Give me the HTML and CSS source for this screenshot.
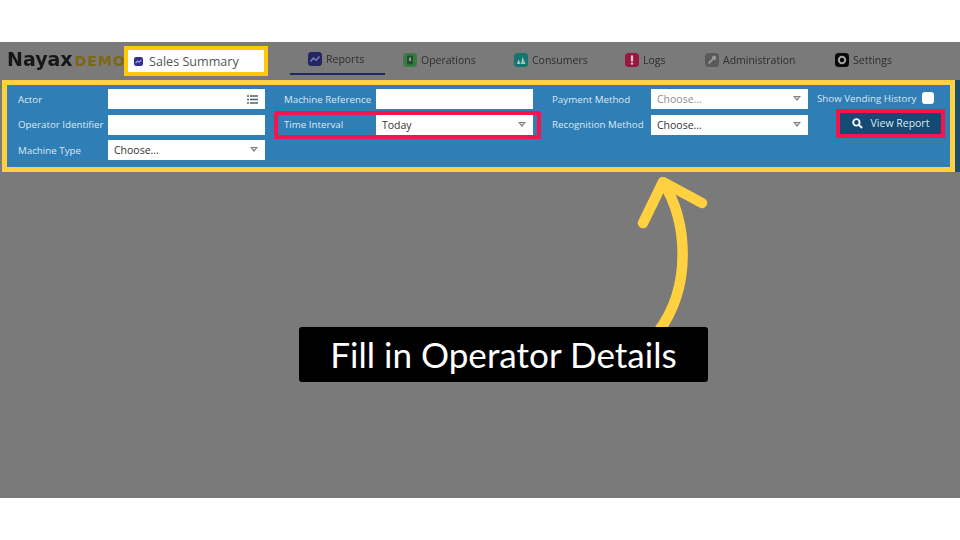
FILE: index.html
```html
<!DOCTYPE html>
<html lang="en">
<head>
<meta charset="UTF-8">
<meta name="viewport" content="width=device-width, initial-scale=1.0">
<title>Sales Summary</title>
<link rel="stylesheet" href="styles.css">
</head>
<body>

<div class="stage">
    <div class="topbar">
        <div class="logo"><span class="logo-name">Nayax</span><span class="logo-demo">DEMO</span></div>
        <div class="page-title">
            <svg class="title-icon" viewBox="0 0 14 14"><rect width="14" height="14" rx="3.5" fill="#2f3290"/><path d="M2.5 9.5 5.5 6 8 8.2 11.5 4.5" fill="none" stroke="#a9abdc" stroke-width="1.6"/></svg>
            <span>Sales Summary</span>
        </div>
        <nav class="tabs">
            <a class="tab tab-active">
                <svg class="tab-icon" viewBox="0 0 14 14"><rect width="14" height="14" rx="3.5" fill="#232660"/><path d="M2.5 9.5 5.5 6 8 8.2 11.5 4.5" fill="none" stroke="#7e81b5" stroke-width="1.5"/></svg>
                Reports
            </a>
            <a class="tab tab-ops">
                <svg class="tab-icon" viewBox="0 0 14 14"><rect width="14" height="14" rx="3.5" fill="#377c42"/><rect x="4" y="2.500" width="6" height="9" rx="0.800" fill="#2b4a31"/><rect x="6.200" y="4.500" width="1.800" height="3.500" fill="#8ab390"/></svg>
                Operations
            </a>
            <a class="tab tab-consumers">
                <svg class="tab-icon" viewBox="0 0 14 14"><rect width="14" height="14" rx="3.5" fill="#14766f"/><path d="M2.800 11 4.500 6.500 6.800 11ZM7 11 8.500 3.800 11.500 11Z" fill="#a2c4c1"/></svg>
                Consumers
            </a>
            <a class="tab tab-logs">
                <svg class="tab-icon" viewBox="0 0 14 14"><rect width="14" height="14" rx="3.5" fill="#97173f"/><rect x="5.900" y="2.500" width="2.200" height="6" fill="#e6c6d0"/><rect x="5.900" y="9.600" width="2.200" height="2" fill="#e6c6d0"/></svg>
                Logs
            </a>
            <a class="tab tab-admin">
                <svg class="tab-icon" viewBox="0 0 14 14"><rect width="14" height="14" rx="3.5" fill="#5a5a5a"/><path d="M3.500 10.500 7.500 6.500" stroke="#979797" stroke-width="1.800"/><circle cx="9" cy="5" r="2.200" fill="#979797"/></svg>
                Administration
            </a>
            <a class="tab tab-settings">
                <svg class="tab-icon" viewBox="0 0 14 14"><rect width="14" height="14" rx="3.5" fill="#0a0a0a"/><circle cx="7" cy="7" r="3.200" fill="none" stroke="#a5a5a5" stroke-width="2"/></svg>
                Settings
            </a>
        </nav>
    </div>

    <div class="filter-row">
        <form class="filters">
            <label class="field-label">Actor</label>
            <div class="input">
                <svg class="list-icon" viewBox="0 0 11 9"><path d="M0 1h2M3 1h8M0 4.500h2M3 4.500h8M0 8h2M3 8h8" stroke="#55606b" stroke-width="1.300"/></svg>
            </div>
            <label class="field-label">Machine Reference</label>
            <div class="input"></div>
            <label class="field-label">Payment Method</label>
            <div class="input select muted">Choose...<span class="caret"></span></div>
            <div class="history"><span>Show Vending History</span><span class="checkbox"></span></div>

            <label class="field-label">Operator Identifier</label>
            <div class="input"></div>
            <label class="field-label">Time Interval</label>
            <div class="input select">Today<span class="caret"></span></div>
            <label class="field-label">Recognition Method</label>
            <div class="input select">Choose...<span class="caret"></span></div>
            <div class="report-cell">
                <button type="button" class="btn-report">
                    <svg class="search-icon" viewBox="0 0 12 12"><circle cx="4.800" cy="4.800" r="3.500" fill="none" stroke="#fff" stroke-width="2"/><path d="M7.500 7.500 11 11" stroke="#fff" stroke-width="2.300"/></svg>
                    View Report
                </button>
            </div>

            <label class="field-label">Machine Type</label>
            <div class="input select">Choose...<span class="caret"></span></div>
        </form>
        <div class="filter-edge"></div>
    </div>

    <!-- annotations on top of the screenshot -->
    <div class="mark mark-time"></div>
    <div class="mark mark-report"></div>
    <svg class="arrow" viewBox="0 0 80 160">
        <path d="M27 5C52 45 56 110 22 155" fill="none" stroke="#ffd040" stroke-width="10.500"/>
        <path d="M7 46 27 5 66 26" fill="none" stroke="#ffd040" stroke-width="10.500" stroke-linecap="round" stroke-linejoin="round"/>
    </svg>
    <div class="caption">Fill in Operator Details</div>
</div>

</body>
</html>
```

FILE: styles.css
```css
/* page frame: white bands above and below the dimmed screen */
body {
    margin: 0;
    background-color: #fff;
    font-family: "Open Sans", "Noto Sans", sans-serif;
}

.stage {
    position: relative;
    height: 456px;
    margin-top: 42px;
    overflow: hidden;
    background-color: #7a7a7a;
}

/* top bar */
.topbar {
    display: flex;
    height: 38px;
}

.logo {
    display: flex;
    align-items: baseline;
    width: 124px;
    padding: 6px 0 0 7px;
    box-sizing: border-box;
    font-family: "DejaVu Sans", sans-serif;
    font-weight: bold;
    white-space: nowrap;
    filter: blur(0.4px);
}

.logo-name {
    font-size: 19px;
    color: #17171a;
}

.logo-demo {
    margin-left: 2px;
    font-size: 14px;
    letter-spacing: 1px;
    color: #7e6712;
}

.page-title {
    display: flex;
    align-items: center;
    gap: 6px;
    width: 144px;
    height: 30px;
    margin-top: 4px;
    padding-left: 6px;
    box-sizing: border-box;
    border: 4px solid #ffc80a;
    background-color: #fff;
    font-size: 12.6px;
    color: #555;
}

.title-icon {
    width: 9px;
    height: 9px;
}

.tabs {
    display: flex;
    margin-left: 22px;
    filter: blur(0.4px);
}

.tab {
    display: flex;
    align-items: center;
    gap: 4px;
    height: 33px;
    padding: 3px 0 0 18px;
    box-sizing: border-box;
    font-size: 10.5px;
    color: #2e2e2e;
}

.tab-active {
    width: 95px;
    padding-top: 2px;
    border-bottom: 2px solid #232662;
}

.tab-ops { width: 111px; }
.tab-consumers { width: 111px; }
.tab-logs { width: 80px; }
.tab-admin { width: 130px; }
.tab-settings { width: 80px; }

.tab-icon {
    width: 14px;
    height: 14px;
}

/* filter panel */
.filter-row {
    display: flex;
    padding-left: 2px;
}

.filters {
    display: grid;
    grid-template-columns: 90px 157px 111px 157px 118px 157px 1fr;
    grid-auto-rows: 20px;
    row-gap: 5.5px;
    align-items: center;
    width: 953px;
    height: 92px;
    padding: 4px 5px 0 11px;
    box-sizing: border-box;
    border: 5px solid #ffd040;
    background-color: #2f7eb6;
}

.filter-edge {
    flex: 1;
    height: 92px;
    background-color: #1a4d70;
}

.field-label {
    font-size: 9.75px;
    color: #dde8f0;
    white-space: nowrap;
}

/* labels after the first column sit 19px past the previous input */
.input + .field-label {
    padding-left: 19px;
}

.input {
    position: relative;
    height: 20px;
    padding-left: 6px;
    box-sizing: border-box;
    background-color: #fff;
    font-size: 10.5px;
    line-height: 20px;
    color: #333;
}

.muted {
    color: #8f8f8f;
}

.list-icon {
    position: absolute;
    right: 7px;
    top: 6px;
    width: 11px;
    height: 9px;
}

.caret {
    position: absolute;
    right: 7px;
    top: 7px;
    width: 0;
    height: 0;
    border-left: 4px solid transparent;
    border-right: 4px solid transparent;
    border-top: 5px solid #7b8188;
}

.caret::after {
    content: "";
    position: absolute;
    left: -2px;
    top: -4px;
    border-left: 2px solid transparent;
    border-right: 2px solid transparent;
    border-top: 2px solid #dfe2e5;
}

.history {
    display: flex;
    align-items: center;
    gap: 6px;
    margin-left: 9px;
    margin-top: -2px;
    font-size: 9.75px;
    color: #dde8f0;
    white-space: nowrap;
}

.checkbox {
    width: 12px;
    height: 12px;
    border-radius: 3px;
    background-color: #fff;
}

.report-cell {
    display: flex;
    justify-content: flex-end;
}

.btn-report {
    display: flex;
    align-items: center;
    justify-content: center;
    gap: 8px;
    width: 101px;
    height: 21px;
    margin-right: 4px;
    margin-bottom: 3px;
    border: none;
    padding: 0;
    background-color: #134b72;
    color: #dfe8ee;
    font-family: inherit;
    font-size: 10.5px;
}

.search-icon {
    width: 11px;
    height: 11px;
}

/* annotations */
.mark {
    position: absolute;
    box-sizing: border-box;
    border: 4px solid #f5154a;
}

.mark-time {
    left: 274px;
    top: 69px;
    width: 267px;
    height: 28px;
}

.mark-report {
    left: 836px;
    top: 67px;
    width: 109px;
    height: 29px;
}

.arrow {
    position: absolute;
    left: 636px;
    top: 135px;
    width: 80px;
    height: 160px;
}

.caption {
    position: absolute;
    left: 299px;
    top: 285px;
    width: 409px;
    height: 55px;
    border-radius: 3px;
    background-color: #000;
    color: #fff;
    font-family: Lato, sans-serif;
    font-size: 35.1px;
    line-height: 55px;
    text-align: center;
}
```
